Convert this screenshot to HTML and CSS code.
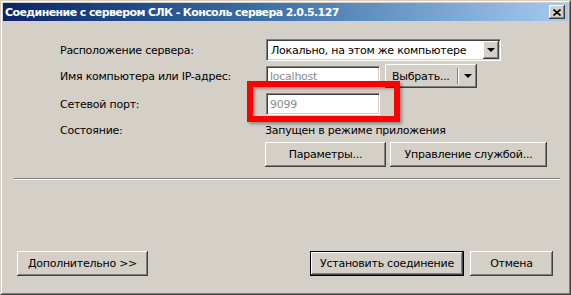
FILE: index.html
```html
<!DOCTYPE html>
<html lang="ru">
<head>
    <meta charset="UTF-8">
    <title>Соединение с сервером СЛК</title>
    <link rel="stylesheet" href="styles.css">
</head>
<body>
    <div class="window">
        <div class="frame">
            <div class="titlebar">
                <span class="title">Соединение с сервером СЛК - Консоль сервера 2.0.5.127</span>
                <div class="close-btn">
                    <svg width="8" height="7" viewBox="0 0 8 7">
                        <path d="M0.5 0.5 L7.5 6.5 M7.5 0.5 L0.5 6.5" stroke="#000" stroke-width="1.6" fill="none"/>
                    </svg>
                </div>
            </div>

            <div class="form">
                <div class="row row-location">
                    <div class="label">Расположение сервера:</div>
                    <div class="combo">
                        <span class="combo-text">Локально, на этом же компьютере</span>
                        <span class="combo-arrow"><span class="triangle"></span></span>
                    </div>
                </div>
                <div class="row row-host">
                    <div class="label">Имя компьютера или IP-адрес:</div>
                    <div class="input input-host">localhost</div>
                    <div class="button split-button">
                        <span class="split-main">Выбрать...</span>
                        <span class="split-arrow"><span class="triangle"></span></span>
                    </div>
                </div>
                <div class="row row-port">
                    <div class="label">Сетевой порт:</div>
                    <div class="input input-port">9099</div>
                </div>
                <div class="row row-state">
                    <div class="label">Состояние:</div>
                    <div class="state-text">Запущен в режиме приложения</div>
                </div>
                <div class="row row-actions">
                    <div class="label"></div>
                    <div class="button btn-params">Параметры...</div>
                    <div class="button btn-service">Управление службой...</div>
                </div>
            </div>

            <div class="separator"></div>

            <div class="footer">
                <div class="button btn-more">Дополнительно &gt;&gt;</div>
                <div class="footer-right">
                    <div class="button btn-connect">Установить соединение</div>
                    <div class="button btn-cancel">Отмена</div>
                </div>
            </div>
        </div>

        <!-- выделение поля порта -->
        <div class="highlight"></div>
    </div>
</body>
</html>
```

FILE: styles.css
```css
body {
    margin: 0;
    font-family: 'DejaVu Sans', Tahoma, sans-serif;
    font-size: 11px;
    letter-spacing: -0.25px;
    color: #000;
    background: #d4d0c8;
}
.window {
    position: relative;
    width: 571px;
    height: 295px;
    box-sizing: border-box;
    border: 1px solid;
    border-color: #d4d0c8 #404040 #404040 #d4d0c8;
    background: #d4d0c8;
}
.frame {
    height: 100%;
    box-sizing: border-box;
    border: 1px solid;
    border-color: #fff #808080 #808080 #fff;
    padding: 1px;
}
.titlebar {
    height: 18px;
    display: flex;
    align-items: center;
    justify-content: space-between;
    padding: 0 3px 0 2px;
    background: linear-gradient(to right, #0a246a 0%, #3a6ea5 45%, #a6caf0 100%);
}
.title {
    color: #fff;
    font-weight: bold;
    font-size: 11px;
    letter-spacing: -0.6px;
    white-space: nowrap;
}
.close-btn {
    width: 16px;
    height: 14px;
    box-sizing: border-box;
    display: flex;
    align-items: center;
    justify-content: center;
    background: #d4d0c8;
    box-shadow: inset -1px -1px #404040, inset 1px 1px #fff, inset -2px -2px #808080;
}
.form {
    padding: 18px 0 0 57px;
}
.row {
    display: flex;
    align-items: center;
}
.row-location { height: 22px; }
.row-host { height: 24px; margin-top: 3px; }
.row-port { height: 22px; margin-top: 5px; }
.row-state { height: 20px; margin-top: 5px; }
.row-actions { height: 25px; margin-top: 2px; }
.label {
    width: 206px;
    flex-shrink: 0;
    white-space: nowrap;
}
.combo {
    width: 235px;
    height: 22px;
    box-sizing: border-box;
    display: flex;
    align-items: center;
    justify-content: space-between;
    background: #fff;
    border: 1px solid;
    border-color: #808080 #fff #fff #808080;
    box-shadow: inset 1px 1px #404040, inset -1px -1px #d4d0c8;
    padding: 1px 1px 1px 4px;
}
.combo-text {
    white-space: nowrap;
}
.combo-arrow,
.split-arrow {
    display: flex;
    align-items: center;
    justify-content: center;
}
.combo-arrow {
    width: 16px;
    height: 18px;
    box-sizing: border-box;
    background: #d4d0c8;
    box-shadow: inset -1px -1px #404040, inset 1px 1px #fff, inset -2px -2px #808080;
}
.triangle {
    width: 0;
    height: 0;
    border-left: 4px solid transparent;
    border-right: 4px solid transparent;
    border-top: 4px solid #000;
}
.input {
    width: 114px;
    box-sizing: border-box;
    display: flex;
    align-items: center;
    padding-left: 3px;
    background: #fff;
    color: #8a8a8a;
    border: 1px solid;
    border-color: #808080 #fff #fff #808080;
    box-shadow: inset 1px 1px #404040, inset -1px -1px #d4d0c8;
}
.input-host { height: 21px; }
.input-port { height: 22px; }
.state-text {
    white-space: nowrap;
    margin-left: -1px;
}
.button {
    height: 25px;
    box-sizing: border-box;
    display: flex;
    align-items: center;
    justify-content: center;
    white-space: nowrap;
    background: #d4d0c8;
    box-shadow: inset -1px -1px #404040, inset 1px 1px #fff, inset -2px -2px #808080;
}
.split-button {
    width: 92px;
    height: 24px;
    margin-left: 5px;
    justify-content: space-between;
}
.split-main {
    padding-left: 7px;
    flex: 1;
    height: 16px;
    display: flex;
    align-items: center;
    border-right: 1px solid #808080;
    box-shadow: 1px 0 #fff;
}
.split-arrow {
    width: 19px;
    height: 20px;
}
.btn-params {
    width: 121px;
    margin-left: -1px;
}
.btn-service {
    width: 157px;
    margin-left: 4px;
}
.separator {
    margin: 11px 0 0 11px;
    width: 546px;
    height: 1px;
    background: #808080;
    border-bottom: 1px solid #fff;
}
.footer {
    display: flex;
    justify-content: space-between;
    padding: 0 15px 0 14px;
    margin-top: 71px;
}
.footer-right {
    display: flex;
    gap: 6px;
}
.btn-more {
    width: 131px;
}
.btn-connect {
    width: 154px;
    border: 1px solid #000;
}
.btn-cancel {
    width: 83px;
}
.highlight {
    position: absolute;
    left: 246px;
    top: 80px;
    width: 153px;
    height: 41px;
    box-sizing: border-box;
    border: 6px solid #f00;
    box-shadow: 2px 2px 3px rgba(0,0,0,0.35), inset 2px 2px 3px rgba(0,0,0,0.3);
}
```
